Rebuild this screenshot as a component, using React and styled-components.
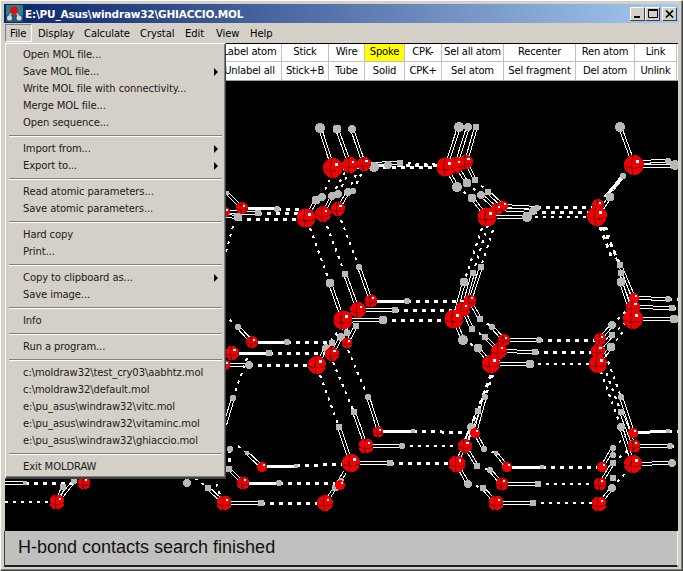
import React from "react";
import styled, { createGlobalStyle } from "styled-components";

const Global = createGlobalStyle`
  html, body { margin: 0; padding: 0; background: #d4d0c8; }
  #root { width: 683px; height: 571px; overflow: hidden; }
`;

const uiFont = `"DejaVu Sans", "Liberation Sans", sans-serif`;

const Window = styled.div`
  position: relative;
  box-sizing: border-box;
  width: 683px;
  height: 571px;
  display: flex;
  flex-direction: column;
  padding: 3px 3px 3px 3px;
  background: #d4d0c8;
  border-top: 1px solid #ffffff;
  border-left: 1px solid #ffffff;
  border-right: 1px solid #404040;
  border-bottom: 1px solid #404040;
  box-shadow: inset -1px -1px 0 #808080;
  font-family: ${uiFont};
  font-size: 10px;
  letter-spacing: -0.1px;
  color: #000;
`;

const TitleBar = styled.div`
  height: 19px;
  flex: none;
  display: flex;
  align-items: center;
  gap: 2px;
  padding: 0 2px 0 2px;
  background: linear-gradient(90deg, #0a246a 0%, #a6caf0 100%);
`;

const TitleText = styled.span`
  flex: 1;
  color: #fff;
  font-weight: 700;
  font-size: 10.5px;
  letter-spacing: -0.2px;
  white-space: nowrap;
`;

const CaptionGroup = styled.div`
  display: flex;
  align-items: center;
`;

const CaptionButton = styled.div`
  box-sizing: border-box;
  width: 15px;
  height: 14px;
  margin-left: ${(p) => p.$gap || 0}px;
  background: #d4d0c8;
  border-top: 1px solid #fff;
  border-left: 1px solid #fff;
  border-right: 1px solid #404040;
  border-bottom: 1px solid #404040;
  display: flex;
  align-items: center;
  justify-content: center;
`;

const MenuBar = styled.div`
  height: 20px;
  flex: none;
  display: flex;
  align-items: center;
  margin-left: 1px;
`;

const MenuTitle = styled.div`
  box-sizing: border-box;
  height: 18px;
  display: flex;
  align-items: center;
  width: ${(p) => p.$w}px;
  padding-left: ${(p) => p.$pad}px;
  ${(p) =>
    p.$open
      ? `border-top: 1px solid #808080; border-left: 1px solid #808080; border-right: 1px solid #fff; border-bottom: 1px solid #fff;`
      : ""}
`;

const Toolbar = styled.div`
  flex: none;
  display: grid;
  grid-template-columns: 213px 64px 47px 36px 40px 37px 62px 72px 59px 42px;
  grid-auto-rows: 18px;
  width: 673px;
  margin-left: 1px;
  background: #fff;
  border-top: 1px solid #000;
  border-bottom: 1px solid #a0a0a0;
`;

const ToolCell = styled.div`
  box-sizing: border-box;
  display: flex;
  align-items: center;
  justify-content: center;
  padding-bottom: 2px;
  white-space: nowrap;
  overflow: hidden;
  font-size: 10px;
  letter-spacing: -0.2px;
  background: ${(p) => (p.$on ? "#ffff00" : "#fff")};
  border-right: 1px solid #c0c0c0;
  border-bottom: ${(p) => (p.$top ? "1px solid #c0c0c0" : "none")};
`;

const Canvas = styled.div`
  flex: 1;
  margin-left: 1px;
  width: 673px;
  background: #000;
  min-height: 0;
`;

const Molecule = styled.svg`
  display: block;
  width: 673px;
  height: 449px;
`;

const StatusBar = styled.div`
  flex: none;
  box-sizing: border-box;
  width: 674px;
  height: 36px;
  display: flex;
  align-items: center;
  padding: 0 0 2px 13px;
  background: #c0c0c0;
  border-left: 1px solid #404040;
  border-bottom: 2px solid #202020;
  border-right: 1px solid #f0f0f0;
  font-family: "Liberation Sans", Arial, sans-serif;
  font-size: 18px;
  letter-spacing: 0;
  color: #111;
`;

const MenuPanel = styled.div`
  position: absolute;
  left: 4px;
  top: 42px;
  width: 221px;
  box-sizing: border-box;
  padding: 2px;
  background: #d4d0c8;
  border-top: 1px solid #fff;
  border-left: 1px solid #fff;
  border-right: 1px solid #404040;
  border-bottom: 2px solid #404040;
  box-shadow: inset -1px -1px 0 #808080;
  z-index: 2;
`;

const MenuItem = styled.div`
  position: relative;
  height: 17px;
  display: flex;
  align-items: center;
  padding-left: 15px;
  white-space: nowrap;
  color: #1a1a1a;
`;

const SubArrow = styled.span`
  position: absolute;
  right: 5px;
  top: 5px;
  width: 0;
  height: 0;
  border-left: 4px solid #000;
  border-top: 4px solid transparent;
  border-bottom: 4px solid transparent;
`;

const Separator = styled.div`
  height: 1px;
  margin: 4px 1px 4px 1px;
  background: #808080;
  box-shadow: 0 1px 0 #fff;
`;

const menuGroups = [
  [["Open MOL file..."], ["Save MOL file...", true], ["Write MOL file with connectivity..."], ["Merge MOL file..."], ["Open sequence..."]],
  [["Import from...", true], ["Export to...", true]],
  [["Read atomic parameters..."], ["Save atomic parameters..."]],
  [["Hard copy"], ["Print..."]],
  [["Copy to clipboard as...", true], ["Save image..."]],
  [["Info"]],
  [["Run a program..."]],
  [["c:\\moldraw32\\test_cry03\\aabhtz.mol"], ["c:\\moldraw32\\default.mol"], ["e:\\pu_asus\\windraw32\\vitc.mol"], ["e:\\pu_asus\\windraw32\\vitaminc.mol"], ["e:\\pu_asus\\windraw32\\ghiaccio.mol"]],
  [["Exit MOLDRAW"]],
];

const menus = [
  ["File", 27, 4, true],
  ["Display", 46, 6],
  ["Calculate", 56, 6],
  ["Crystal", 45, 6],
  ["Edit", 31, 6],
  ["View", 34, 6],
  ["Help", 34, 6],
];

const toolRows = [
  ["Label atom", "Stick", "Wire", "Spoke", "CPK-", "Sel all atom", "Recenter", "Ren atom", "Link"],
  ["Unlabel all", "Stick+B", "Tube", "Solid", "CPK+", "Sel atom", "Sel fragment", "Del atom", "Unlink"],
];

/* O atoms: x, y, r */
const oxygens = [
  [225,212,5],[242,208,6],[338,209,7],[323,214,8],[306,218,9.5],
  [364,164,7],[350,165,8],[333,168,10],[466,162,7],[456,165,8],[446,167,9.5],
  [503,206,5],[497,209,6],[487,217,9.5],[598,205,6],[597,216,10],[634,165,10],
  [371,301,6.5],[358,310,8],[343,320,9.5],[470,301,6.5],[463,309,7.5],[454,319,9.5],
  [347,343,5.5],[332,354,7],[317,365,9],[252,342,6],[232,353,7],[225,365,5],
  [504,340,6],[499,351,8],[491,364,9],[600,339,6],[598,351,7],[598,364,9],
  [634,298,5],[633,307,7],[633,319,10],
  [378,432,5.5],[366,446,7.5],[351,463,9],[475,433,5],[465,446,7],[457,464,8.5],
  [633,433,5],[634,446,6.5],[633,464,9],[340,485,5],
  [84,483,6.5],[57,502,7.5],[262,467,5],[243,483,6.5],[224,503,7.5],[325,503,8],
  [507,467,5],[502,484,6.5],[496,503,7.5],[602,467,5],[600,484,6.5],[599,504,7.5],
];

/* H atoms: x, y, r */
const hydrogens = [
  [320,128,4.5],[337,129,4],[352,129,3.5],[374,167,4.5],[388,165,3.5],[400,163,3],
  [316,200,4],[322,197,3.5],[332,196,3.5],[338,194,3.5],[348,192,3.5],[353,191,2.5],
  [277,209,2.5],[258,213,3],[238,217,4],[227,193,2],
  [459,127,4.5],[468,127,3.5],[476,127,3],[457,187,4.5],[467,183,4],[475,180,3],
  [472,198,4],[481,195,3.5],[488,192,3],[537,208,2.5],[533,211,3.5],[527,217,4.5],
  [620,127,4.5],[675,165,4.5],[668,161,2.5],[610,197,4],[623,176,2.5],
  [359,267,2.5],[345,274,3],[330,283,4],[407,301,2.5],[395,310,3],[383,320,4],
  [287,342,2.5],[269,353,3],[249,365,3.5],[238,327,2.5],
  [356,326,3],[347,333,3],[341,337,3.5],[332,343,3],[326,348,3.5],
  [368,397,2.5],[354,412,3],[339,427,3],[233,398,2.5],
  [481,267,3],[473,273,3],[464,282,4],[668,299,2.5],[672,308,3],[674,319,4],
  [539,340,2.5],[535,352,3],[530,364,4],[620,265,3],[621,273,3],[621,282,4],
  [480,319,3],[472,329,3],[463,340,4.5],[492,327,2.5],[485,337,3],[478,348,4],
  [612,325,3.5],[612,335,3],[611,347,4],[485,397,2.5],[478,411,3],[471,427,3.5],
  [621,397,2.5],[621,412,3],[621,427,3.5],
  [25,483,2],[63,487,3],[74,481,2.5],[279,483,2.5],[296,466,2],[261,503,3],
  [230,449,2.5],[229,469,3],[187,483,3.5],[208,488,3],[247,453,2],
  [335,488,3],[341,481,2.5],[402,446,2.5],[390,463,3],[413,431,2],
  [484,449,2.5],[477,466,3],[468,484,3.5],[496,453,2],[490,470,2.5],[483,488,3],
  [542,467,2],[538,484,3],[533,503,3],[613,448,2.5],[613,463,3],[612,488,3.5],[613,455,2.5],[613,478,3],
  [670,446,2.5],[672,463,3.5],[668,431,2],
];

/* bonds: x1, y1, x2, y2, kind. d double, t thick, h heavy dashes, f fine dashes */
const bonds = [
  [320,128,333,168,"d"],[337,129,350,165,"d"],[352,129,364,164,"d"],
  [333,168,374,167,"d"],[350,165,388,165,"t"],[364,164,400,163,"d"],
  [400,163,447,165,"f"],[388,165,447,165,"h"],[374,167,447,167,"h"],
  [306,218,316,200,"d"],[323,214,332,196,"d"],[338,209,348,192,"d"],
  [322,197,333,172,"f"],[338,194,350,170,"f"],[353,191,364,168,"f"],[332,196,345,172,"f"],[348,192,358,170,"f"],
  [225,212,258,213,"d"],[242,208,277,209,"t"],[225,216,238,217,"d"],
  [277,209,301,209,"h"],[258,213,302,214,"h"],[238,219,298,219,"h"],[242,208,227,193,"d"],
  [310,228,330,283,"f"],[327,226,345,274,"f"],[341,220,359,267,"f"],
  [330,283,343,320,"d"],[345,274,358,310,"d"],[359,267,371,301,"d"],
  [233,226,226,252,"f"],
  [459,127,446,167,"d"],[468,127,456,165,"d"],[476,127,466,162,"d"],
  [446,167,457,187,"d"],[456,165,467,183,"d"],[466,162,475,180,"d"],
  [472,198,487,217,"d"],[481,195,497,209,"d"],[488,192,503,206,"d"],
  [457,187,472,198,"f"],[467,183,481,195,"f"],[475,180,488,192,"f"],
  [487,217,527,217,"d"],[497,209,533,211,"d"],[503,206,537,208,"d"],
  [527,217,590,217,"f"],[533,212,592,212,"h"],[537,207,593,207,"h"],
  [620,127,634,165,"d"],[634,162,668,161,"d"],[634,166,675,166,"d"],
  [623,176,605,197,"t"],[610,197,597,216,"d"],[623,176,612,190,"d"],
  [603,227,620,265,"h"],[600,227,612,258,"h"],[606,227,621,273,"f"],
  [482,228,464,282,"f"],[493,230,481,267,"f"],[488,225,473,273,"f"],
  [481,267,470,301,"d"],[473,273,463,309,"d"],[464,282,454,319,"d"],
  [620,265,634,298,"d"],[621,273,633,307,"d"],[621,282,633,319,"d"],
  [634,298,668,299,"d"],[633,307,672,308,"d"],[633,319,674,319,"d"],
  [668,299,678,299,"h"],[672,308,678,308,"h"],
  [371,301,407,301,"t"],[407,301,465,301,"h"],[358,310,395,310,"d"],[395,310,455,310,"h"],
  [343,320,383,320,"d"],[383,320,445,320,"h"],
  [454,319,463,340,"d"],[463,309,472,329,"d"],[470,301,480,319,"d"],
  [480,319,492,327,"f"],[472,329,485,337,"f"],[463,340,478,348,"f"],
  [492,327,504,340,"d"],[485,337,499,351,"d"],[478,348,491,364,"d"],
  [504,340,539,340,"d"],[499,351,535,352,"d"],[491,364,530,364,"d"],
  [539,340,598,340,"h"],[535,352,595,352,"h"],[530,364,590,364,"f"],
  [600,339,612,325,"d"],[598,351,612,335,"d"],[598,364,611,347,"d"],
  [612,325,626,311,"f"],[612,335,626,322,"f"],[611,347,623,332,"f"],
  [499,360,485,397,"f"],[493,368,478,411,"f"],[491,375,471,427,"h"],
  [485,397,475,433,"d"],[478,411,465,446,"d"],[471,427,457,464,"d"],
  [600,339,621,397,"f"],[598,351,621,412,"f"],[598,364,621,427,"f"],
  [621,397,633,433,"d"],[621,412,634,446,"d"],[621,427,633,464,"d"],
  [252,342,287,342,"t"],[232,353,269,353,"t"],[225,365,249,365,"d"],
  [287,342,330,342,"h"],[269,353,325,353,"h"],[249,365,308,365,"h"],
  [252,342,238,327,"d"],[238,327,227,317,"f"],
  [317,365,326,348,"d"],[332,354,341,337,"d"],[347,343,356,326,"d"],
  [326,348,340,328,"f"],[341,337,352,322,"f"],[332,343,345,325,"f"],
  [320,375,339,427,"f"],[333,362,354,412,"f"],[348,350,368,397,"f"],
  [368,397,378,428,"d"],[354,412,366,446,"d"],[339,427,351,463,"d"],
  [247,358,233,398,"f"],[233,398,225,425,"d"],
  [378,432,413,431,"t"],[413,431,470,433,"h"],[366,446,402,446,"d"],[402,446,460,446,"f"],
  [351,463,390,463,"d"],[390,463,450,464,"h"],
  [475,433,484,449,"d"],[465,446,477,466,"d"],[457,464,468,484,"d"],
  [484,449,496,453,"f"],[477,466,490,470,"f"],[468,484,483,488,"f"],
  [496,453,507,467,"d"],[490,470,502,484,"d"],[483,488,496,503,"d"],
  [507,467,542,467,"t"],[542,467,600,467,"h"],[502,484,538,484,"d"],[538,484,595,484,"f"],
  [496,503,533,503,"d"],[533,503,592,503,"f"],
  [599,504,612,488,"d"],[600,484,613,463,"d"],[602,467,613,448,"d"],
  [612,488,628,470,"f"],[613,463,628,450,"f"],[613,448,626,436,"f"],
  [633,433,668,431,"t"],[668,431,678,431,"h"],[634,446,670,446,"d"],[670,446,678,446,"h"],
  [633,464,672,463,"d"],
  [5,483,25,483,"d"],[25,483,80,483,"h"],[5,502,50,502,"f"],
  [57,502,63,487,"d"],[57,502,74,481,"d"],[66,476,62,482,"f"],[72,476,70,480,"f"],
  [247,453,262,467,"d"],[238,446,247,453,"f"],[229,469,243,483,"d"],[230,449,229,469,"h"],
  [208,488,224,503,"d"],[195,478,208,488,"f"],[183,476,187,483,"f"],[214,476,220,495,"f"],
  [243,483,279,483,"t"],[279,483,335,483,"h"],[262,467,296,466,"t"],[296,466,343,464,"h"],
  [224,503,261,503,"d"],[261,503,318,503,"h"],
  [325,503,335,488,"d"],[335,488,345,472,"d"],
];

const Bond = ({ b }) => {
  const [x1, y1, x2, y2, kind] = b;
  if (kind === "d") {
    const len = Math.hypot(x2 - x1, y2 - y1) || 1;
    const nx = (-(y2 - y1) / len) * 1.5;
    const ny = ((x2 - x1) / len) * 1.5;
    return (
      <g stroke="#fff" strokeWidth="1">
        <line x1={x1 + nx} y1={y1 + ny} x2={x2 + nx} y2={y2 + ny} />
        <line x1={x1 - nx} y1={y1 - ny} x2={x2 - nx} y2={y2 - ny} />
      </g>
    );
  }
  const styleFor = {
    t: { strokeWidth: 3 },
    h: { strokeWidth: 3, strokeDasharray: "4 5" },
    f: { strokeWidth: 2, strokeDasharray: "3 5" },
  }[kind];
  return <line x1={x1} y1={y1} x2={x2} y2={y2} stroke="#fff" {...styleFor} />;
};

const Oxygen = ({ a }) => {
  const [x, y, r] = a;
  const s = Math.max(1.5, r * 0.3);
  return (
    <g>
      <circle cx={x} cy={y} r={r} fill="#f00000" />
      {r >= 5.5 && (
        <path
          d={`M${x - r} ${y + r * 0.1} Q${x} ${y + r * 0.55} ${x + r} ${y + r * 0.1} M${x - r * 0.1} ${y - r} Q${x - r * 0.35} ${y} ${x - r * 0.1} ${y + r}`}
          fill="none"
          stroke="#8c0000"
          strokeWidth="1.2"
        />
      )}
      <rect x={x + r * 0.2} y={y - r * 0.55} width={s} height={s} fill="#fff" />
    </g>
  );
};

const Hydrogen = ({ a }) => <circle cx={a[0]} cy={a[1]} r={a[2] + 0.5} fill="#b8b8b8" />;

const AppIcon = () => (
  <svg width="17" height="17" viewBox="0 0 17 17">
    <rect width="17" height="17" fill="#2c7f86" />
    <rect x="0" y="10" width="17" height="7" fill="#1e5d70" />
    <path d="M6 7 L3 12 M10 7 L13 12" stroke="#c8c8c8" strokeWidth="1.5" />
    <circle cx="8" cy="5.5" r="4" fill="#e01010" />
    <circle cx="3.5" cy="13" r="2.5" fill="#d8d8d8" />
    <circle cx="13" cy="13" r="2.5" fill="#d8d8d8" />
  </svg>
);

export default function App() {
  return (
    <>
      <Global />
      <Window>
        <TitleBar>
          <AppIcon />
          <TitleText>E:\PU_Asus\windraw32\GHIACCIO.MOL</TitleText>
          <CaptionGroup>
            <CaptionButton>
              <svg width="9" height="9" viewBox="0 0 9 9"><rect x="1" y="7" width="6" height="2" fill="#000" /></svg>
            </CaptionButton>
            <CaptionButton>
              <svg width="10" height="9" viewBox="0 0 10 9"><path d="M0.5 1.5H9.5V8.5H0.5Z" fill="none" stroke="#000" /><rect x="0" y="0" width="10" height="2" fill="#000" /></svg>
            </CaptionButton>
            <CaptionButton $gap={2}>
              <svg width="9" height="8" viewBox="0 0 9 8"><path d="M1 0.5L8 7.5M8 0.5L1 7.5" stroke="#000" strokeWidth="1.7" /></svg>
            </CaptionButton>
          </CaptionGroup>
        </TitleBar>
        <MenuBar>
          {menus.map(([name, w, pad, open]) => (
            <MenuTitle key={name} $w={w} $pad={pad} $open={open}>{name}</MenuTitle>
          ))}
        </MenuBar>
        <Toolbar>
          {toolRows.map((row, ri) => (
            <React.Fragment key={ri}>
              <ToolCell $top={ri === 0} />
              {row.map((label) => (
                <ToolCell key={label} $top={ri === 0} $on={label === "Spoke"}>{label}</ToolCell>
              ))}
            </React.Fragment>
          ))}
        </Toolbar>
        <Canvas>
          <Molecule viewBox="5 81 673 449" shapeRendering="crispEdges">
            {bonds.map((b, i) => <Bond key={i} b={b} />)}
            {hydrogens.map((a, i) => <Hydrogen key={i} a={a} />)}
            {oxygens.map((a, i) => <Oxygen key={i} a={a} />)}
          </Molecule>
        </Canvas>
        <StatusBar>H-bond contacts search finished</StatusBar>
        <MenuPanel>
          {menuGroups.map((group, gi) => (
            <React.Fragment key={gi}>
              {gi > 0 && <Separator />}
              {group.map(([label, sub]) => (
                <MenuItem key={label}>
                  {label}
                  {sub && <SubArrow />}
                </MenuItem>
              ))}
            </React.Fragment>
          ))}
        </MenuPanel>
      </Window>
    </>
  );
}
